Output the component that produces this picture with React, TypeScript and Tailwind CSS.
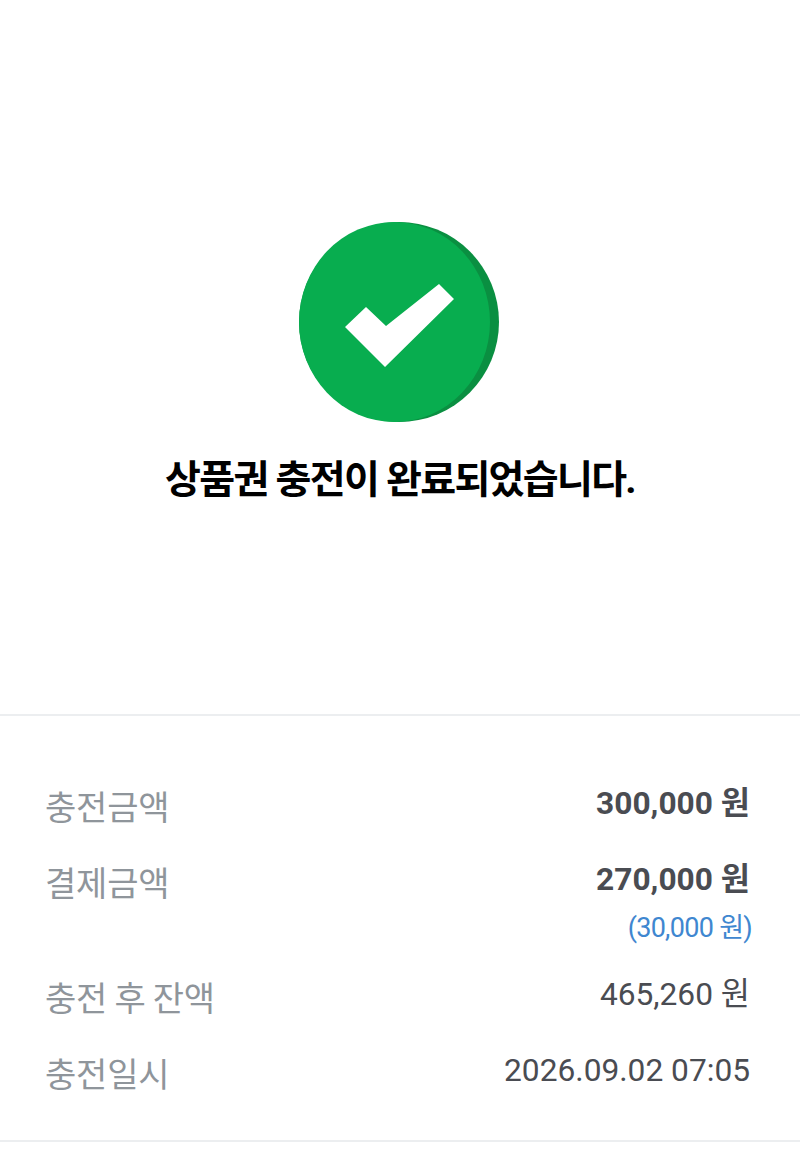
const FONT = "font-['Roboto','Noto_Sans_CJK_KR',sans-serif]";

function SuccessIcon() {
  return (
    <svg className="mr-[2px]" width="200" height="200" viewBox="0 0 200 200">
      <circle cx="100" cy="100" r="100" fill="#0a8f41" />
      <ellipse cx="95.5" cy="100" rx="95.5" ry="100" fill="#08ad4f" />
      <polygon points="46,105 67,85 87,104 140,62 155,77 86,145" fill="#ffffff" />
    </svg>
  );
}

interface RowProps {
  label: string;
  value: string;
  bold?: boolean;
  sub?: string;
}

function Row({ label, value, bold, sub }: RowProps) {
  return (
    <div className="flex justify-between">
      <span className="mt-[4px] mb-[-4px] text-[34px] leading-[46px] text-[#8f959b] font-normal tracking-[-0.2px] [word-spacing:-1px]">
        {label}
      </span>
      <div className="flex flex-col items-end">
        <span
          className={`text-[31.7px] leading-[46px] text-[#4a4c52] ${bold ? 'font-bold' : 'font-normal'}`}
        >
          {value}
        </span>
        {sub && (
          <span className="text-[27px] leading-[38px] mt-[6px] mb-[-5px] -mr-[2px] text-[#3f87d0] tracking-[-0.7px]">
            {sub}
          </span>
        )}
      </div>
    </div>
  );
}

export default function App() {
  return (
    <div className={`${FONT} w-[800px] h-[1170px] bg-white`}>
      <div className="h-[714px] pt-[222px] flex flex-col items-center">
        <SuccessIcon />
        <h1 className="mt-[32px] text-[39px] leading-[52px] font-bold text-black tracking-[-1.7px]">
          상품권 충전이 완료되었습니다.
        </h1>
      </div>
      <div className="border-y-2 border-[#eceef0] pl-[45px] pr-[50px] pt-[65px] pb-[46px] flex flex-col gap-[30px]">
        <Row label="충전금액" value="300,000 원" bold />
        <Row label="결제금액" value="270,000 원" bold sub="(30,000 원)" />
        <Row label="충전 후 잔액" value="465,260 원" />
        <Row label="충전일시" value="2026.09.02 07:05" />
      </div>
    </div>
  );
}
